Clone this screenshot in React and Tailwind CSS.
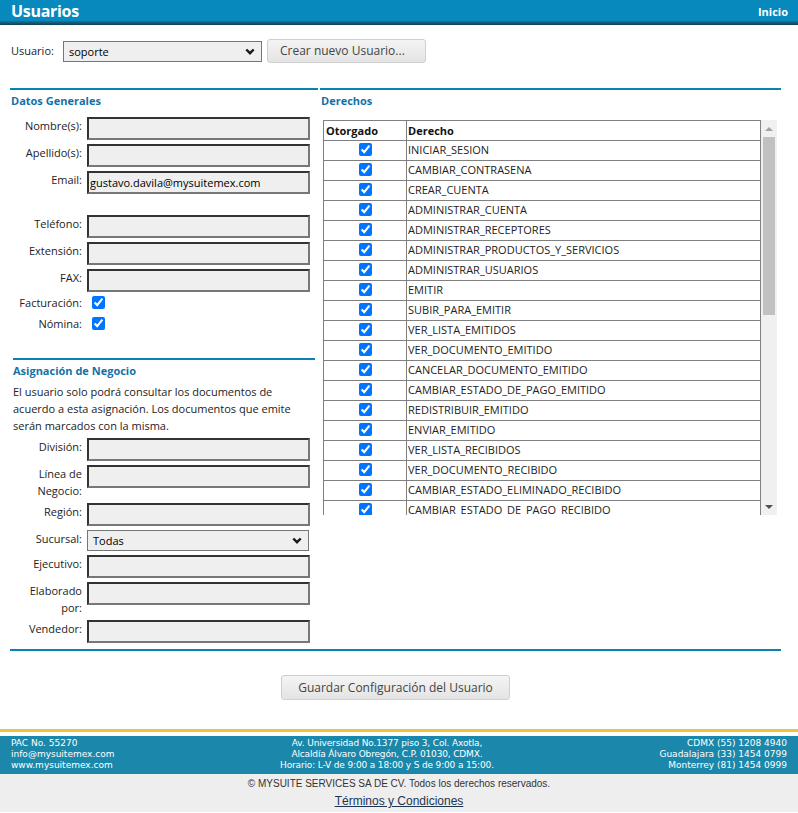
import React from 'react';

const DERECHOS = [
  'INICIAR_SESION',
  'CAMBIAR_CONTRASENA',
  'CREAR_CUENTA',
  'ADMINISTRAR_CUENTA',
  'ADMINISTRAR_RECEPTORES',
  'ADMINISTRAR_PRODUCTOS_Y_SERVICIOS',
  'ADMINISTRAR_USUARIOS',
  'EMITIR',
  'SUBIR_PARA_EMITIR',
  'VER_LISTA_EMITIDOS',
  'VER_DOCUMENTO_EMITIDO',
  'CANCELAR_DOCUMENTO_EMITIDO',
  'CAMBIAR_ESTADO_DE_PAGO_EMITIDO',
  'REDISTRIBUIR_EMITIDO',
  'ENVIAR_EMITIDO',
  'VER_LISTA_RECIBIDOS',
  'VER_DOCUMENTO_RECIBIDO',
  'CAMBIAR_ESTADO_ELIMINADO_RECIBIDO',
  'CAMBIAR_ESTADO_DE_PAGO_RECIBIDO',
  'REDISTRIBUIR_RECIBIDO',
  'ENVIAR_RECIBIDO',
  'VER_REPORTES',
  'DESCARGAR_REPORTES',
];

const Chevron = () => (
  <svg width="10" height="7" viewBox="0 0 10 7" className="shrink-0">
    <path d="M1.3 1.5 L5 5.2 L8.7 1.5" fill="none" stroke="#1a1a1a" strokeWidth="2.4" />
  </svg>
);

// combo con apariencia de select nativo
const Combo = ({ value, className = '' }) => (
  <div
    role="combobox"
    className={`h-[21px] flex items-center justify-between bg-[#efefef] border border-[#767676] pl-[5px] pr-[6px] text-[11px] leading-[19px] text-black ${className}`}
  >
    <span>{value}</span>
    <Chevron />
  </div>
);

const TextBox = ({ value = '' }) => (
  <input
    type="text"
    defaultValue={value}
    className="ml-[5px] w-[223px] h-[23px] shrink-0 bg-[#efefef] border-2 border-solid border-t-[#333] border-l-[#333] border-b-[#777] border-r-[#777] px-[1px] text-[11px] text-black outline-none"
  />
);

const Field = ({ label, value, children }) => (
  <div className="flex items-start">
    <label className="w-[72px] shrink-0 text-right leading-[17px] text-[11px] text-[#222]">{label}</label>
    {children || <TextBox value={value} />}
  </div>
);

const CheckRow = ({ label }) => (
  <div className="flex items-center h-[21px]">
    <label className="w-[72px] shrink-0 text-right leading-[17px] text-[11px] text-[#222]">{label}</label>
    <input type="checkbox" defaultChecked className="ml-[10px] w-[13px] h-[13px] m-0" />
  </div>
);

const SectionTitle = ({ children, className = '' }) => (
  <h2 className={`h-[16px] leading-[16px] text-[11px] font-bold text-[#1471a8] ${className}`}>{children}</h2>
);

const Rule = ({ className = '' }) => <div className={`h-[2px] bg-[#0b82b6] ${className}`} />;

const Scrollbar = () => (
  <div className="w-[16px] h-full bg-[#f0f0f0] flex flex-col items-center shrink-0">
    <div className="h-[17px] w-full flex items-center justify-center">
      <div className="w-0 h-0 border-l-[4px] border-r-[4px] border-b-[4px] border-l-transparent border-r-transparent border-b-[#a3a3a3]" />
    </div>
    <div className="w-[12px] h-[178px] bg-[#c1c1c1]" />
    <div className="flex-1" />
    <div className="h-[17px] w-full flex items-center justify-center">
      <div className="w-0 h-0 border-l-[4px] border-r-[4px] border-t-[4px] border-l-transparent border-r-transparent border-t-[#505050]" />
    </div>
  </div>
);

const DerechosTable = () => (
  <div className="ml-[3px] mt-[11px] w-[454px] h-[395px] flex">
    <div className="flex-1 h-full overflow-hidden">
      <div className="border border-[#808080]">
        <div className="flex h-[20px] border-b border-[#808080] text-[11px] font-bold text-[#111] leading-[19px]">
          <div className="w-[83px] shrink-0 border-r border-[#808080] pl-[2px]">Otorgado</div>
          <div className="flex-1 pl-[1px]">Derecho</div>
        </div>
        {DERECHOS.map((d) => (
          <div key={d} className="flex h-[20px] border-b border-[#808080] text-[11px] text-[#222] leading-[18px]">
            <div className="w-[83px] shrink-0 border-r border-[#808080] flex items-center justify-center">
              <input type="checkbox" defaultChecked className="w-[13px] h-[13px] m-0 -mt-[2px]" />
            </div>
            <div className="flex-1 pl-[1px]">{d}</div>
          </div>
        ))}
      </div>
    </div>
    <Scrollbar />
  </div>
);

export default function App() {
  return (
    <div className="w-[798px] min-h-[813px] bg-white font-['Open_Sans',sans-serif] text-[#222]">
      {/* barra superior */}
      <div className="h-[25px] flex items-start justify-between bg-[linear-gradient(to_bottom,#0789be_0%,#0789be_82%,#1f6a8c_86%,#0d3c53_100%)]">
        <h1 className="pl-[11px] h-[21px] leading-[22px] text-[16px] font-bold tracking-[-0.3px] text-white">Usuarios</h1>
        <a className="pr-[10px] h-[21px] leading-[24px] text-[11px] font-bold text-white">Inicio</a>
      </div>

      <div className="px-[10px] w-[791px]">
        {/* selector de usuario */}
        <div className="mt-[14px] h-[24px] flex items-center">
          <span className="pl-[1px] w-[53px] text-[11px] text-[#222]">Usuario:</span>
          <Combo value="soporte" className="w-[199px]" />
          <button className="ml-[5px] w-[159px] h-[24px] rounded-[3px] border border-[#cfcfcf] bg-[linear-gradient(to_bottom,#f4f4f4,#e4e4e4)] text-[12px] text-[#444] text-left pl-[12px]">
            Crear nuevo Usuario...
          </button>
        </div>

        {/* columnas */}
        <div className="mt-[25px] flex gap-[2px]">
          {/* datos generales */}
          <div className="w-[308px] shrink-0">
            <Rule />
            <SectionTitle className="mt-[3px] pl-[1px]">Datos Generales</SectionTitle>
            <div className="mt-[8px] flex flex-col gap-[4px]">
              <Field label="Nombre(s):" />
              <Field label="Apellido(s):" />
              <Field label="Email:" value="gustavo.davila@mysuitemex.com" />
              <div className="h-[13px]" />
              <Field label="Teléfono:" />
              <Field label="Extensión:" />
              <Field label="FAX:" />
            </div>
            <div>
              <CheckRow label="Facturación:" />
              <CheckRow label="Nómina:" />
            </div>

            <Rule className="mt-[24px] mx-[3px]" />
            <SectionTitle className="mt-[3px] pl-[3px]">Asignación de Negocio</SectionTitle>
            <p className="mt-[4px] pl-[3px] text-[11px] leading-[17px] text-[#222]">
              El usuario solo podrá consultar los documentos de<br />
              acuerdo a esta asignación. Los documentos que emite<br />
              serán marcados con la misma.
            </p>
            <div className="mt-[4px] flex flex-col gap-[4px]">
              <Field label="División:" />
              <Field label={<>Línea de<br />Negocio:</>} />
              <Field label="Región:" />
              <Field label="Sucursal:">
                <Combo value="Todas" className="ml-[5px] w-[222px]" />
              </Field>
              <Field label="Ejecutivo:" />
              <Field label={<>Elaborado<br />por:</>} />
              <Field label="Vendedor:" />
            </div>
          </div>

          {/* derechos */}
          <div className="flex-1">
            <Rule />
            <SectionTitle className="mt-[3px] pl-[1px]">Derechos</SectionTitle>
            <DerechosTable />
          </div>
        </div>

        <Rule className="mt-[6px]" />

        <div className="mt-[24px] flex justify-center">
          <button className="w-[229px] h-[25px] rounded-[3px] border border-[#cfcfcf] bg-[linear-gradient(to_bottom,#f4f4f4,#e4e4e4)] text-[12px] text-[#444]">
            Guardar Configuración del Usuario
          </button>
        </div>
      </div>

      {/* pie */}
      <footer className="mt-[29px]">
        <div className="h-[3px] bg-[#ebc63c]" />
        <div className="h-[4px] bg-white" />
        <div className="h-[38px] bg-[#1b87ab] px-[11px] pt-[2px] flex justify-between text-white text-[9px] leading-[11px] font-['DejaVu_Sans',sans-serif]">
          <div>
            <div>PAC No. 55270</div>
            <div>info@mysuitemex.com</div>
            <div>www.mysuitemex.com</div>
          </div>
          <div className="text-center tracking-[-0.15px]">
            <div>Av. Universidad No.1377 piso 3, Col. Axotla,</div>
            <div>Alcaldía Álvaro Obregón, C.P. 01030, CDMX.</div>
            <div>Horario: L-V de 9:00 a 18:00 y S de 9:00 a 15:00.</div>
          </div>
          <div className="text-right">
            <div>CDMX (55) 1208 4940</div>
            <div>Guadalajara (33) 1454 0799</div>
            <div>Monterrey (81) 1454 0999</div>
          </div>
        </div>
        <div className="h-[38px] bg-[#eeeeee] pt-[2px] text-center leading-[16px] font-['Liberation_Sans',sans-serif] text-[#333]">
          <div className="text-[10px]">© MYSUITE SERVICES SA DE CV. Todos los derechos reservados.</div>
          <a className="text-[12px] underline text-[#1c3553]">Términos y Condiciones</a>
        </div>
      </footer>
    </div>
  );
}
